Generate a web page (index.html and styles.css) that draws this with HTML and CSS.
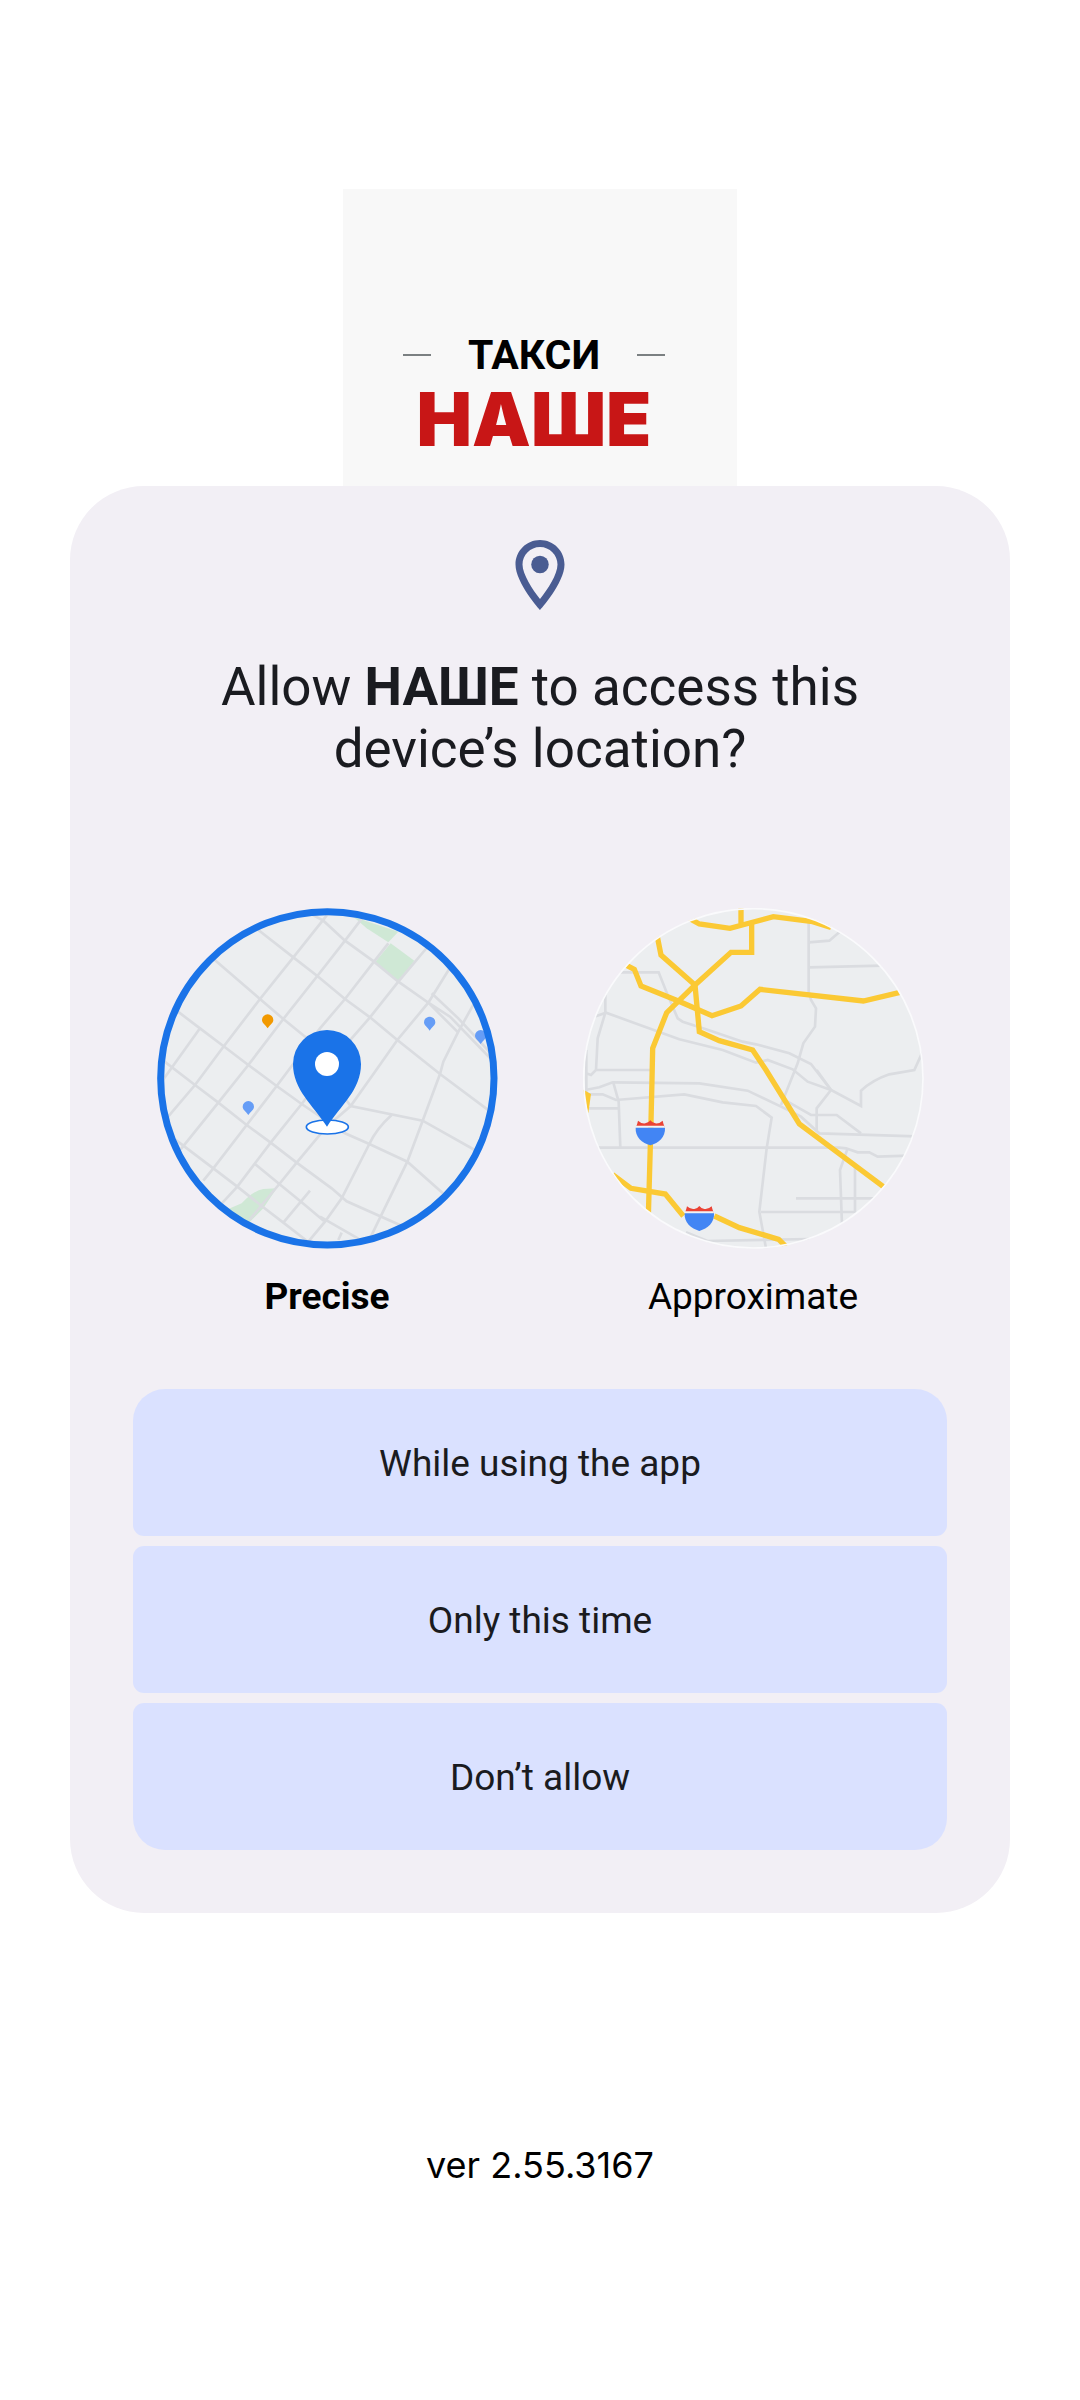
FILE: index.html
```html
<!DOCTYPE html>
<html lang="en">
<head>
<meta charset="utf-8">
<meta name="viewport" content="width=device-width, initial-scale=1">
<title>НАШЕ</title>
<link rel="stylesheet" href="styles.css">
</head>
<body>
<main class="screen">
  <header class="brand" lang="ru">
    <div class="brand-top">
      <span class="brand-rule"></span>
      <span class="brand-kind">ТАКСИ</span>
      <span class="brand-rule"></span>
    </div>
    <div class="brand-name">НАШЕ</div>
  </header>

  <form class="dialog" role="dialog" aria-labelledby="dialog-title">
    <svg class="dialog-icon" viewBox="0 0 24 24" aria-hidden="true">
      <path d="M12 2C8.13 2 5 5.13 5 9c0 5.25 7 13 7 13s7-7.75 7-13c0-3.87-3.130-7-7-7zM7 9c0-2.76 2.240-5 5-5s5 2.240 5 5c0 2.880-2.880 7.190-5 9.880C9.920 16.210 7 11.850 7 9z"/>
      <circle cx="12" cy="9" r="2.5"/>
    </svg>
    <h1 class="dialog-title" id="dialog-title">Allow <b>НАШЕ</b> to access this device’s location?</h1>

    <div class="accuracy">
      <label class="option">
        <input class="option-input" type="radio" name="accuracy" value="precise" checked>
        <svg class="map" viewBox="21 24 1023 1023" aria-hidden="true">
          <defs>
            <clipPath id="disc"><circle cx="532" cy="535" r="511"/></clipPath>
            <path id="poi" d="M0-17a17 17 0 0 1 17 17c0 9-9 13-17 25c-8-12-17-16-17-25a17 17 0 0 1 17-17z"/>
          </defs>
          <g clip-path="url(#disc)">
            <rect class="land" x="21" y="24" width="1023" height="1023"/>
            <g class="park">
              <path d="M610 50L745 95L715 127L650 85z"/>
              <path d="M722 130L793 182L745 245L675 187z"/>
              <path d="M235 927L275 910Q310 872 340 867L380 865L340 925L290 975z"/>
            </g>
            <g class="street">
              <path d="M325 90L430 172L502 228L585 297L660 352L742 420L870 522L1025 638"/>
              <path d="M190 176L330 297L400 357L600 520"/>
              <path d="M80 332L150 385L220 438L295 495L380 558L455 612L585 700L658 732L772 785L888 888"/>
              <path d="M35 478L135 555L205 608L290 675L362 728L440 788L545 865L590 904L770 984"/>
              <path d="M75 718L190 805L262 860L335 918L400 968L475 1026"/>
              <path d="M315 792L388 852L455 907L522 963M510 950L625 1016"/>
              <path d="M475 38L520 62L585 122L672 185L745 245L835 308L925 398M845 280L925 355L1030 468M835 308L900 350L1020 474"/>
              <path d="M35 545L150 385"/>
              <path d="M50 655L135 555L222 438L330 297L430 172L535 40"/>
              <path d="M92 748L205 608L295 495L400 357L502 228L585 122L640 50"/>
              <path d="M160 842L190 805L290 675L380 558L510 385L585 297L672 185L715 130"/>
              <path d="M210 916L262 860L362 728L455 612L605 415L660 352L745 245L835 138"/>
              <path d="M300 958L388 852L440 788L530 680L602 618L675 515L742 420L835 308L905 195"/>
              <path d="M400 968L480 872M475 1025L525 965L575 895L658 732Q680 685 725 645"/>
              <path d="M660 1015L772 785L818 662L870 522L880 485L925 395L975 305"/>
              <path d="M585 595L602 618L818 662L985 756M565 1020L575 998"/>
            </g>
            <use class="poi-food" href="#poi" x="353" y="360"/>
            <g class="poi-shop">
              <use href="#poi" x="839" y="367"/>
              <use href="#poi" x="992" y="407"/>
              <use href="#poi" x="295" y="620"/>
            </g>
            <ellipse class="pin-base" cx="532" cy="681" rx="63" ry="21"/>
            <path class="pin" d="M531 390a102 102 0 0 1 102 102c0 78-61 124-102 188c-41-64-102-110-102-188a102 102 0 0 1 102-102z"/>
            <circle class="pin-eye" cx="531" cy="492" r="36"/>
          </g>
          <circle class="ring-selected" cx="532" cy="535" r="500"/>
        </svg>
        <span class="option-label">Precise</span>
      </label>

      <label class="option">
        <input class="option-input" type="radio" name="accuracy" value="approximate">
        <svg class="map" viewBox="21 24 1023 1023" aria-hidden="true">
          <defs>
            <g id="shield">
              <path class="shield-top" d="M-43 0Q-39-9-37-19Q-26-9-15-11Q-6-12 0-20Q6-12 15-11Q26-9 37-19Q39-9 43 0z"/>
              <path class="shield-gap" d="M-43-4H43V2H-43z"/>
              <path class="shield-body" d="M-44 2H44C46 30 25 48 0 55C-25 48-46 30-44 2z"/>
            </g>
          </defs>
          <g clip-path="url(#disc)">
            <rect class="land" x="21" y="24" width="1023" height="1023"/>
            <g class="street">
              <path d="M125 217H248L275 285L305 355L320 365L390 388L500 425L540 433L640 460L705 492L765 570L855 618V572Q890 540 940 523L1015 510L1040 455"/>
              <path d="M50 352L90 338L200 378L310 418L440 450L540 488L575 480L650 508L695 545L765 570"/>
              <path d="M88 280V338L65 415L60 510L45 525L30 520M60 510H225M31 450V600"/>
              <path d="M698 60V275L705 300L720 325L717 380L682 430L665 490L645 540L615 615"/>
              <path d="M698 127L760 122L800 88M698 202L920 197"/>
              <path d="M28 570L70 562L110 547L370 550L515 572L620 622L675 650L730 700L1020 709"/>
              <path d="M28 583H80L120 600L325 583L440 607L540 618L587 653L572 745L550 935L570 1045"/>
              <path d="M112 548L128 605L133 743M35 625H128"/>
              <path d="M60 743H790L810 745L845 757H880L905 770L1000 767"/>
              <path d="M722 510L765 570L722 625V695M635 605L705 645H782L855 700"/>
              <path d="M815 745L792 810L798 975M837 800V936H555M660 895H905M390 1023L700 1017M330 997L400 1025"/>
            </g>
            <g class="highway">
              <path d="M340 55L370 72L462 85L510 72L592 50L710 65L765 82M495 20V75"/>
              <path d="M527 70V157H465L357 255L272 338L230 445L228 540L225 665L217 950"/>
              <path d="M243 105L255 165L357 255L370 395L430 422L530 450L570 510L670 672L922 860"/>
              <path d="M140 190L175 208L195 258L307 303L408 347L495 318L552 268L862 303L972 277"/>
              <path d="M110 824L165 865L268 882L322 948M415 948L490 983L608 1018L630 1040"/>
            </g>
            <path class="highway-end" d="M20 568L45 582L37 640z"/>
            <use href="#shield" x="223" y="681"/>
            <use href="#shield" x="370" y="938"/>
          </g>
          <circle class="ring" cx="532" cy="535" r="509"/>
        </svg>
        <span class="option-label">Approximate</span>
      </label>
    </div>

    <div class="actions">
      <button class="action" type="button">While using the app</button>
      <button class="action" type="button">Only this time</button>
      <button class="action" type="button">Don’t allow</button>
    </div>
  </form>

  <p class="version">ver 2.55.3167</p>
</main>
</body>
</html>
```
FILE: styles.css
```css
*, *::before, *::after {
  box-sizing: border-box;
}

body {
  margin: 0;
  background: #fff;
  color: #000;
  font-family: Roboto, "Noto Sans", sans-serif;
}

.screen {
  display: flex;
  flex-direction: column;
  align-items: center;
  min-height: 100vh;
  padding: 189px 70px;
}

/* Brand */
.brand {
  display: flex;
  flex-direction: column;
  align-items: center;
  width: 394px;
  max-width: 100%;
  padding: 142px 12px 27px 0;
  background: #f8f8f8;
}

.brand-top {
  display: flex;
  align-items: center;
  justify-content: space-between;
  width: 262px;
}

.brand-rule {
  width: 28px;
  height: 2px;
  background: #7b8082;
}

.brand-kind {
  font: 700 41px/48px Roboto, sans-serif;
}

.brand-name {
  color: #c81616;
  font: 900 74px/80px Inter, sans-serif;
}

/* Permission dialog */
.dialog {
  display: flex;
  flex-direction: column;
  align-items: center;
  width: 100%;
  padding: 47px 44px 63px;
  border-radius: 74px;
  background: #f2eff5;
}

.dialog-icon {
  width: 84px;
  height: 84px;
  fill: #4a5c92;
}

.dialog-title {
  max-width: 688px;
  margin: 39px 0 128px;
  color: #1a1b20;
  font-size: 53px;
  font-weight: 400;
  line-height: 62px;
  text-align: center;
}

.dialog-title b {
  font-weight: 700;
}

/* Accuracy choice */
.accuracy {
  display: grid;
  grid-template-columns: 1fr 1fr;
  width: 100%;
}

.option {
  display: flex;
  position: relative;
  flex-direction: column;
  align-items: center;
  gap: 26px;
  cursor: pointer;
}

.option-input {
  position: absolute;
  opacity: 0;
}

.option-label {
  font-size: 37px;
  line-height: 44px;
}

.option-input:checked ~ .option-label {
  font-weight: 700;
}

.map {
  width: 341px;
  max-width: 90%;
}

.land { fill: #eceef0; }
.park { fill: #cfe8d5; }

.street {
  fill: none;
  stroke: #dadce0;
  stroke-width: 8;
}

.highway {
  fill: none;
  stroke: #fbc934;
  stroke-width: 16;
}

.highway-end { fill: #fbc934; }
.poi-food { fill: #f29900; }
.poi-shop { fill: #669df6; }
.pin { fill: #1a73e8; }
.pin-eye { fill: #fff; }

.pin-base {
  fill: #fff;
  stroke: #1a73e8;
  stroke-width: 5;
}

.ring-selected {
  fill: none;
  stroke: #1a73e8;
  stroke-width: 21;
}

.ring {
  fill: none;
  stroke: #fafafc;
  stroke-width: 5;
}

.shield-top { fill: #ea4335; }
.shield-gap { fill: #f1f3f4; }
.shield-body { fill: #4285f4; }

/* Actions */
.actions {
  display: flex;
  flex-direction: column;
  align-self: stretch;
  gap: 10px;
  margin: 70px 19px 0;
}

.action {
  min-height: 147px;
  padding: 3px 32px 0;
  border: 0;
  border-radius: 11px;
  background: #dae1ff;
  color: #1a1b20;
  font: 400 37px/44px Roboto, sans-serif;
  cursor: pointer;
}

.action:first-child {
  border-top-left-radius: 32px;
  border-top-right-radius: 32px;
}

.action:last-child {
  border-bottom-left-radius: 32px;
  border-bottom-right-radius: 32px;
}

.version {
  margin: 231px 0 0;
  font: 400 36px/42px Inter, sans-serif;
}
```
